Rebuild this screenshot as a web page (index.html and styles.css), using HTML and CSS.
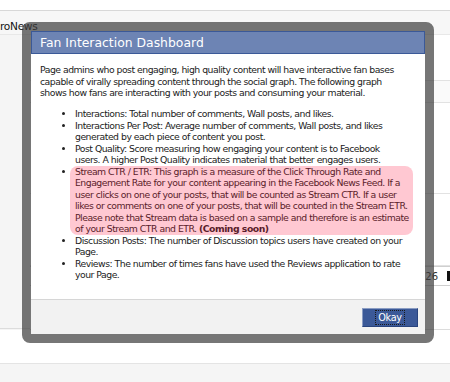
FILE: index.html
```html
<!DOCTYPE html>
<html lang="en">
<head>
    <meta charset="UTF-8">
    <title>Fan Interaction Dashboard</title>
    <link rel="stylesheet" href="styles.css">
</head>
<body>
    <div class="page">
        <div class="topbar"></div>
        <div class="titlebar"><span class="brand">roNews</span></div>
        <div class="main">
            <div class="side"></div>
            <div class="content">
                <div class="row row-a"></div>
                <div class="row row-b"></div>
                <div class="row row-c"></div>
                <div class="row row-d"></div>
                <div class="row row-e"><span class="count">26</span><span class="bar"></span></div>
                <div class="row row-f"></div>
            </div>
        </div>
        <div class="bottom-row"></div>
    </div>

    <div class="dialog">
        <div class="dialog-inner">
            <h2 class="dialog-title">Fan Interaction Dashboard</h2>
            <div class="dialog-body">
                <p>Page admins who post engaging, high quality content will have interactive fan bases<br>capable of virally spreading content through the social graph. The following graph<br>shows how fans are interacting with your posts and consuming your material.</p>
                <ul class="terms">
                    <li>Interactions: Total number of comments, Wall posts, and likes.</li>
                    <li>Interactions Per Post: Average number of comments, Wall posts, and likes<br>generated by each piece of content you post.</li>
                    <li>Post Quality: Score measuring how engaging your content is to Facebook<br>users. A higher Post Quality indicates material that better engages users.</li>
                    <li><div class="hl">Stream CTR / ETR: This graph is a measure of the Click Through Rate and<br>Engagement Rate for your content appearing in the Facebook News Feed. If a<br>user clicks on one of your posts, that will be counted as Stream CTR. If a user<br>likes or comments on one of your posts, that will be counted in the Stream ETR.<br>Please note that Stream data is based on a sample and therefore is an estimate<br>of your Stream CTR and ETR. <strong>(Coming soon)</strong></div></li>
                    <li>Discussion Posts: The number of Discussion topics users have created on your<br>Page.</li>
                    <li>Reviews: The number of times fans have used the Reviews application to rate<br>your Page.</li>
                </ul>
            </div>
            <div class="dialog-footer">
                <button class="btn-okay"><span>Okay</span></button>
            </div>
        </div>
    </div>
</body>
</html>
```

FILE: styles.css
```css
body {
    margin: 0;
    width: 450px;
    height: 382px;
    overflow: hidden;
    position: relative;
    font-family: "DejaVu Sans", Verdana, sans-serif;
    background-color: #f5f5f5;
    color: #000;
}

/* page behind the dialog */

.topbar {
    height: 10px;
    background-color: #fff;
    border-bottom: 1px solid #d8d8d8;
}

.titlebar {
    height: 23px;
    background-color: #f7f7f7;
    border-bottom: 1px solid #e8e8e8;
}

.brand {
    display: block;
    padding-top: 10px;
    font-size: 10.6px;
    line-height: 11px;
    letter-spacing: -0.3px;
    color: #111;
}

.main {
    display: flex;
}

.side {
    width: 30px;
    height: 293px;
    background-color: #f5f5f5;
    border-bottom: 1px solid #dcdcdc;
}

.content {
    flex: 1;
    background-color: #fff;
}

.row {
    border-bottom: 1px solid #e2e2e2;
}

.row-a { height: 45px; }
.row-b { height: 21px; background-color: #fafafa; }
.row-c { height: 90px; }
.row-d { height: 71px; }

.row-e {
    height: 18px;
    display: flex;
    justify-content: flex-end;
    align-items: center;
    font-size: 10px;
    color: #333;
    border-top: 1px solid #cfcfcf;
    border-bottom-color: #cfcfcf;
}

.count {
    margin-right: 9px;
}

.bar {
    width: 3px;
    height: 10px;
    background-color: #111;
}

.row-f {
    height: 43px;
    border-bottom-color: #dcdcdc;
}

.bottom-row {
    height: 33px;
    background-color: #fff;
    border-bottom: 1px solid #e4e4e4;
}

/* dialog */

.dialog {
    position: absolute;
    left: 22px;
    top: 22px;
    width: 412px;
    box-sizing: border-box;
    border: 9px solid rgba(60, 60, 60, 0.7);
    border-radius: 8px;
}

.dialog-inner {
    background-color: #fff;
}

.dialog-title {
    margin: 0;
    height: 21px;
    line-height: 21px;
    padding-left: 8px;
    background-color: #6d84b4;
    border: 1px solid #3b5998;
    color: #fff;
    font-size: 12.4px;
    font-weight: normal;
}

.dialog-body {
    padding: 10px 12px 18.5px 9px;
    font-size: 9.3px;
    line-height: 11.5px;
    letter-spacing: -0.5px;
    white-space: nowrap;
    color: #222;
}

.dialog-body p {
    margin: 0;
}

.terms {
    margin: 9.5px 0 0 35px;
    padding: 0;
}

.hl {
    margin-left: -5px;
    padding: 0 5px;
    background-color: #ffc8d2;
    border-radius: 8px;
    color: #5a1c2a;
}

.dialog-footer {
    display: flex;
    justify-content: flex-end;
    padding: 8px 7px 7px;
    background-color: #f2f2f2;
    border-top: 1px solid #d6d6d6;
}

.btn-okay {
    width: 56px;
    height: 19px;
    box-sizing: border-box;
    padding: 0;
    background-color: #3b5998;
    border: 1px solid;
    border-color: #8a9cc2 #29447e #29447e #8a9cc2;
    color: #fff;
    font-family: "DejaVu Sans", Verdana, sans-serif;
    font-size: 9.7px;
    letter-spacing: -0.3px;
}

.btn-okay span {
    padding: 1px 2px;
    outline: 1px dotted #1a1a1a;
}
```
